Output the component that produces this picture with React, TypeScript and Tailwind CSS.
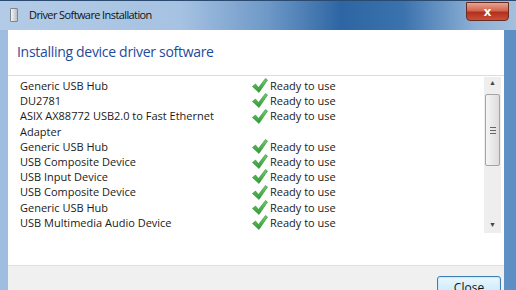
import React from 'react';

const ROWS: { name: string; wrap?: string }[] = [
  { name: 'Generic USB Hub' },
  { name: 'DU2781' },
  { name: 'ASIX AX88772 USB2.0 to Fast Ethernet', wrap: 'Adapter' },
  { name: 'Generic USB Hub' },
  { name: 'USB Composite Device' },
  { name: 'USB Input Device' },
  { name: 'USB Composite Device' },
  { name: 'Generic USB Hub' },
  { name: 'USB Multimedia Audio Device' },
];

const Check: React.FC = () => (
  <svg width="16" height="15" viewBox="0 0 16 15" className="shrink-0">
    <defs>
      <linearGradient id="chk" x1="0" y1="0" x2="0" y2="1">
        <stop offset="0" stopColor="#6fd06a" />
        <stop offset="1" stopColor="#2d9a35" />
      </linearGradient>
    </defs>
    <polygon points="0.5,8.5 3.5,6 6.5,9.5 13.5,0.5 15.5,2 7,14.5" fill="url(#chk)" stroke="#2f8a33" strokeWidth="0.6" />
  </svg>
);

const App: React.FC = () => {
  return (
    <div
      className="w-[516px] h-[290px] overflow-hidden flex flex-col bg-gradient-to-r from-[#9fbde0] via-[#8fb2d8] to-[#5d8fc4]"
      style={{ fontFamily: '"Open Sans", "Noto Sans", sans-serif' }}
    >
      {/* title bar */}
      <div className="h-[30px] shrink-0 flex items-start border-t border-[#2a4a70] bg-[linear-gradient(90deg,#b3cbe6_0%,#a6c2e2_35%,#6d98c7_52%,#2e66a3_66%,#3a72ad_78%,#8db0d6_92%,#a3bfdd_100%)]">
        <div className="mt-[7px] ml-[10px] w-[8px] h-[14px] rounded-[1px] border border-[#7d8590] bg-gradient-to-r from-[#f4f4f4] to-[#b9bec4]" />
        <span className="mt-[6px] ml-[11px] text-[11px] tracking-[-0.6px] leading-[16px] text-[#111]">Driver Software Installation</span>
        <div className="ml-auto mr-[7px] mt-[1px] w-[43px] h-[19px] rounded-b-[4px] border border-[#6b2a20] bg-[linear-gradient(180deg,#e6a391_0%,#d2664f_45%,#b3301c_55%,#c8503a_100%)] flex items-center justify-center">
          <span className="text-white text-[13px] font-bold leading-none">x</span>
        </div>
      </div>

      {/* client area */}
      <div className="flex-1 ml-[8px] mr-[12px] bg-white flex flex-col">
        <div className="h-[45px] shrink-0 pl-[9px] pt-[9px]">
          <span className="text-[14px] tracking-[-0.3px] leading-[22px] text-[#1f4a9a]">Installing device driver software</span>
        </div>

        <div className="h-[190px] shrink-0 border-t border-[#dcdcdc] flex">
          <div className="flex-1 pt-[2px] pl-[12px] text-[11px] leading-[15.2px] text-[#1a1a1a]">
            {ROWS.map((r, i) => (
              <div key={i} className="flex">
                <div className="w-[232px]">
                  <div>{r.name}</div>
                  {r.wrap && <div>{r.wrap}</div>}
                </div>
                <div className="flex items-center h-[15.2px] gap-[2px]">
                  <Check />
                  <span>Ready to use</span>
                </div>
              </div>
            ))}
          </div>

          {/* scrollbar */}
          <div className="w-[17px] h-[156px] mt-[1px] mr-[3px] bg-[#eeeeee] flex flex-col items-center">
            <div className="h-[13px] flex items-center justify-center text-[7px] text-[#444]">▲</div>
            <div className="w-[15px] h-[72px] mt-[4px] rounded-[2px] border border-[#a4a4a4] bg-gradient-to-r from-[#f5f5f5] to-[#dcdcdc] flex flex-col items-center justify-center gap-[2px]">
              <div className="w-[6px] h-[1px] bg-[#666]" />
              <div className="w-[6px] h-[1px] bg-[#666]" />
              <div className="w-[6px] h-[1px] bg-[#666]" />
            </div>
            <div className="flex-1" />
            <div className="h-[16px] flex items-center justify-center text-[7px] text-[#444]">▼</div>
          </div>
        </div>

        <div className="flex-1 border-t border-[#dfdfdf] bg-[#f0f0f0] flex justify-end items-start pr-[3px] pt-[10px]">
          <div className="w-[64px] h-[23px] rounded-[3px] border border-[#3c7fb1] bg-gradient-to-b from-[#eaf6fd] to-[#bee6fd] shadow-[inset_0_0_0_1px_#c9eafc] flex items-center justify-center text-[12px] text-[#111]">
            Close
          </div>
        </div>
      </div>
    </div>
  );
};

export default App;
